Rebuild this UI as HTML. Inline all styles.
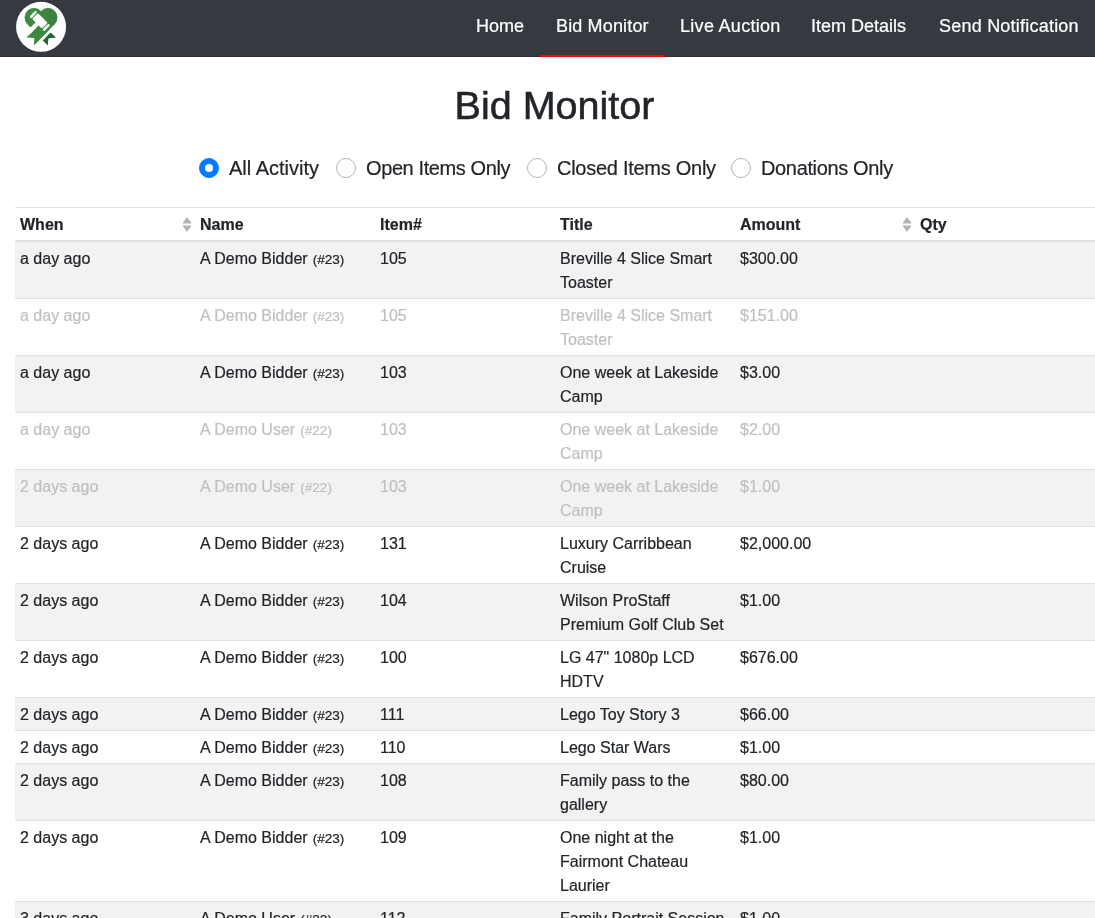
<!DOCTYPE html>
<html><head><meta charset="utf-8">
<style>
*{box-sizing:border-box}
html,body{margin:0;padding:0;background:#fff;width:1095px;height:918px;overflow:hidden}
body{font-family:"Liberation Sans",sans-serif;color:#212529;font-size:16px;line-height:24px;position:relative;-webkit-text-stroke:0.2px currentColor}
.nav{position:absolute;left:0;top:0;width:1095px;height:57px;background:#343a40;border-bottom:1px solid #2c3136}
.nav a{position:absolute;top:14px;color:#fff;font-size:18px;line-height:24px;white-space:nowrap;text-decoration:none}
.nav .active{position:absolute;left:540px;top:55px;width:125px;height:2px;background:#ff0000}
.logo{position:absolute;left:14px;top:0;width:54px;height:54px}
h1{position:absolute;margin:0;left:7px;width:1095px;text-align:center;top:81px;font-size:39.5px;line-height:48px;font-weight:400;-webkit-text-stroke:0.55px currentColor}
.radio{position:absolute;top:158px;width:20px;height:20px;border-radius:50%;border:1px solid #adb5bd;background:#fff}
.radio.on{background:#007bff;border-color:#007bff}
.radio.on:after{content:"";position:absolute;left:5px;top:5px;width:8px;height:8px;border-radius:50%;background:#fff}
.rl{position:absolute;top:156px;font-size:20px;line-height:24px;white-space:nowrap}
table{position:absolute;left:15px;top:207px;border-collapse:collapse;table-layout:fixed;width:1260px}
td,th{padding:5px 5px 3px;vertical-align:top;text-align:left;border-top:1px solid #dee2e6;white-space:nowrap}
th{font-weight:700;border-bottom:2px solid #dee2e6;position:relative}
tbody tr:nth-child(odd){background:#f2f2f2}
tr.f td{color:#bec0c2}
small{font-size:13.6px;line-height:12px;margin-left:0.6px}
.sort{position:absolute;right:3px;top:7.5px;width:10px;height:16px}
</style></head>
<body>
<div id="root" style="position:absolute;left:0;top:0;width:1095px;height:918px;will-change:transform">
<div class="nav">
  <svg class="logo" viewBox="14 0 54 54" width="54" height="54">
    <defs><linearGradient id="lg" x1="0" y1="0" x2="1" y2="0.3"><stop offset="0" stop-color="#3f8f45"/><stop offset="1" stop-color="#397e3f"/></linearGradient></defs>
    <circle cx="41.06" cy="26.8" r="25" fill="#fff"/>
    <path d="M41 37.6L27.0 23.9A9.45 9.45 0 0 1 41 11.2A9.45 9.45 0 0 1 55.0 23.9Z" fill="url(#lg)"/>
    <path d="M42.6 21.4L50.1 28.9L34 45.4L34.3 37.9L26.4 37.6Z" fill="#3b8a42"/>
    <path d="M50.5 32.4L56.1 37.4L48.4 38.5L47.8 45.6L42.8 40.6Z" fill="#2a6434"/>
    <g transform="rotate(45)" fill="#fff">
      <rect x="41.0" y="-10" width="4.3" height="14"/>
      <rect x="36.1" y="-17.6" width="13.8" height="8.3" rx="1.2"/>
      <rect x="32.6" y="-17.65" width="2.5" height="8.6" rx="1.1"/>
      <rect x="50.9" y="-17.65" width="2.5" height="8.6" rx="1.1"/>
    </g>
  </svg>
  <a style="left:476px">Home</a>
  <a style="left:556px;letter-spacing:0.15px">Bid Monitor</a>
  <a style="left:680px;letter-spacing:0.3px">Live Auction</a>
  <a style="left:811px">Item Details</a>
  <a style="left:939px;letter-spacing:0.22px">Send Notification</a>
  <div class="active"></div>
</div>
<h1>Bid Monitor</h1>
<div class="radio on" style="left:199px"></div><span class="rl" style="left:229px">All Activity</span>
<div class="radio" style="left:336px"></div><span class="rl" style="left:366px;letter-spacing:-0.4px">Open Items Only</span>
<div class="radio" style="left:527px"></div><span class="rl" style="left:557px;letter-spacing:-0.27px">Closed Items Only</span>
<div class="radio" style="left:731px"></div><span class="rl" style="left:761px;letter-spacing:-0.35px">Donations Only</span>
<table>
<colgroup><col style="width:180px"><col style="width:180px"><col style="width:180px"><col style="width:180px"><col style="width:180px"><col style="width:360px"></colgroup>
<thead><tr>
<th>When<svg class="sort" viewBox="0 0 10 16"><path d="M0.4 7.5L5 1L9.6 7.5Z M0.4 9.6L5 16L9.6 9.6Z" fill="#b3b3b3"/></svg></th>
<th>Name</th><th>Item#</th><th>Title</th>
<th>Amount<svg class="sort" viewBox="0 0 10 16"><path d="M0.4 7.5L5 1L9.6 7.5Z M0.4 9.6L5 16L9.6 9.6Z" fill="#b3b3b3"/></svg></th>
<th>Qty</th></tr></thead>
<tbody>
<tr><td>a day ago</td><td>A Demo Bidder <small>(#23)</small></td><td>105</td><td>Breville 4 Slice Smart<br>Toaster</td><td>$300.00</td><td></td></tr>
<tr class="f"><td>a day ago</td><td>A Demo Bidder <small>(#23)</small></td><td>105</td><td>Breville 4 Slice Smart<br>Toaster</td><td>$151.00</td><td></td></tr>
<tr><td>a day ago</td><td>A Demo Bidder <small>(#23)</small></td><td>103</td><td>One week at Lakeside<br>Camp</td><td>$3.00</td><td></td></tr>
<tr class="f"><td>a day ago</td><td>A Demo User <small>(#22)</small></td><td>103</td><td>One week at Lakeside<br>Camp</td><td>$2.00</td><td></td></tr>
<tr class="f"><td>2 days ago</td><td>A Demo User <small>(#22)</small></td><td>103</td><td>One week at Lakeside<br>Camp</td><td>$1.00</td><td></td></tr>
<tr><td>2 days ago</td><td>A Demo Bidder <small>(#23)</small></td><td>131</td><td>Luxury Carribbean<br>Cruise</td><td>$2,000.00</td><td></td></tr>
<tr><td>2 days ago</td><td>A Demo Bidder <small>(#23)</small></td><td>104</td><td>Wilson ProStaff<br>Premium Golf Club Set</td><td>$1.00</td><td></td></tr>
<tr><td>2 days ago</td><td>A Demo Bidder <small>(#23)</small></td><td>100</td><td>LG 47" 1080p LCD<br>HDTV</td><td>$676.00</td><td></td></tr>
<tr><td>2 days ago</td><td>A Demo Bidder <small>(#23)</small></td><td>111</td><td>Lego Toy Story 3</td><td>$66.00</td><td></td></tr>
<tr><td>2 days ago</td><td>A Demo Bidder <small>(#23)</small></td><td>110</td><td>Lego Star Wars</td><td>$1.00</td><td></td></tr>
<tr><td>2 days ago</td><td>A Demo Bidder <small>(#23)</small></td><td>108</td><td>Family pass to the<br>gallery</td><td>$80.00</td><td></td></tr>
<tr><td>2 days ago</td><td>A Demo Bidder <small>(#23)</small></td><td>109</td><td>One night at the<br>Fairmont Chateau<br>Laurier</td><td>$1.00</td><td></td></tr>
<tr><td>3 days ago</td><td>A Demo User <small>(#22)</small></td><td>112</td><td>Family Portrait Session</td><td>$1.00</td><td></td></tr>
</tbody>
</table>
</div>
</body></html>
